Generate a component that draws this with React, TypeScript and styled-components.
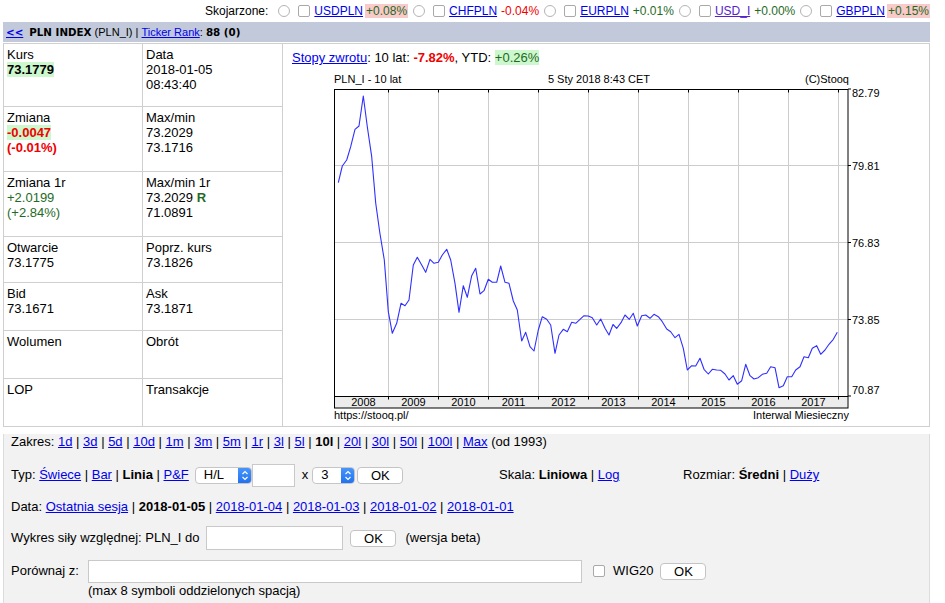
import React from 'react'
import styled, { createGlobalStyle } from 'styled-components'

const GlobalStyle = createGlobalStyle`
  body {
    margin: 0;
    background: #fff;
    color: #000;
    font-family: 'Liberation Sans', Arial, Helvetica, sans-serif;
    font-size: 13px;
  }
`

const UP = '#1f6b1f'
const DOWN = '#f00000'
const LINK = '#0000ee'

const Page = styled.div`
  margin-left: 3px;
  width: 927px;
`

const TopRow = styled.div`
  display: flex;
  justify-content: flex-end;
  align-items: center;
  height: 22px;
  font-size: 12px;
`

const TopLabel = styled.span`
  margin-right: 5px;
`

const Radio = styled.span`
  display: inline-block;
  box-sizing: border-box;
  width: 12px;
  height: 12px;
  margin: 0 8px 0 5px;
  border: 1px solid #b4b4b4;
  border-radius: 50%;
  background: #fff;
`

const Check = styled.span`
  display: inline-block;
  box-sizing: border-box;
  width: 12px;
  height: 12px;
  margin-right: 4px;
  border: 1px solid #a9a9a9;
  border-radius: 2px;
  background: #fff;
`

const Link = styled.a<{ $visited?: boolean }>`
  color: ${(p) => (p.$visited ? '#5522cc' : LINK)};
  text-decoration: underline;
  cursor: pointer;
`

const Change = styled.span<{ $tone: 'up' | 'down'; $pink?: boolean }>`
  margin-left: ${(p) => (p.$pink ? '2px' : '4px')};
  padding: 0 ${(p) => (p.$pink ? '1px' : '0')};
  color: ${(p) => (p.$tone === 'up' ? UP : DOWN)};
  background: ${(p) => (p.$pink ? '#f9caca' : 'transparent')};
`

const HeaderBar = styled.div`
  display: flex;
  align-items: center;
  height: 20px;
  padding-left: 3px;
  background: #c1c9da;
  font-size: 11px;
  white-space: pre;
`

const HeaderBold = styled.b`
  font-family: 'DejaVu Sans', Verdana, sans-serif;
  font-size: 10.3px;
`

const BackLink = styled(Link)`
  font-family: 'DejaVu Sans', Verdana, sans-serif;
  font-size: 10.3px;
  font-weight: bold;
  margin-right: 6px;
`

const MainGrid = styled.div`
  display: grid;
  grid-template-columns: 139px 140px 1fr;
  grid-template-rows: 63px 65px 65px 46px 48px 48px 48px;
  margin-top: 1px;
  border-top: 1px solid #cfcfcf;
  border-left: 1px solid #cfcfcf;
`

const Cell = styled.div`
  box-sizing: border-box;
  padding: 3px 3px;
  line-height: 15px;
  border-right: 1px solid #cfcfcf;
  border-bottom: 1px solid #cfcfcf;
`

const Line = styled.div``

const Val = styled.span<{ $color?: string; $bold?: boolean; $bg?: string }>`
  color: ${(p) => p.$color || '#000'};
  font-weight: ${(p) => (p.$bold ? 'bold' : 'normal')};
  background: ${(p) => p.$bg || 'transparent'};
`

const ChartCell = styled.div`
  grid-column: 3;
  grid-row: 1 / span 7;
  box-sizing: border-box;
  padding: 6px 9px 0;
  line-height: 15px;
  border-right: 1px solid #cfcfcf;
  border-bottom: 1px solid #cfcfcf;
`

const ChartSvg = styled.svg`
  display: block;
  margin: 5px auto 0;
  font-family: 'Liberation Sans', Arial, sans-serif;
  font-size: 11px;
`

const Controls = styled.div`
  box-sizing: border-box;
  min-height: 176px;
  padding: 0 0 10px 7px;
  background: #f2f2f2;
  border-left: 1px solid #dcdcdc;
  border-right: 1px solid #dcdcdc;
`

const Row = styled.div<{ $mt: number; $h?: number }>`
  display: flex;
  align-items: center;
  margin-top: ${(p) => p.$mt}px;
  height: ${(p) => p.$h ?? 16}px;
  line-height: 16px;
  white-space: pre;
`

const Group = styled.div<{ $w?: number }>`
  display: flex;
  align-items: center;
  width: ${(p) => (p.$w ? `${p.$w}px` : 'auto')};
  white-space: pre;
`

const Hint = styled.span`
  margin-left: 9px;
`

const Times = styled.span`
  margin: 0 4px 0 7px;
`

const FakeSelect = styled.div<{ $w: number; $ml?: number }>`
  display: flex;
  align-items: center;
  box-sizing: border-box;
  width: ${(p) => p.$w}px;
  height: 17px;
  margin-left: ${(p) => p.$ml ?? 0}px;
  padding-left: 8px;
  background: #fff;
  border: 1px solid #c6c6c6;
  border-radius: 4px;
  overflow: hidden;
`

const SelectText = styled.span`
  flex: 1;
  font-size: 13px;
`

const Stepper = styled.span`
  display: flex;
  align-items: center;
  justify-content: center;
  width: 14px;
  height: 17px;
  margin-right: -1px;
  background: linear-gradient(#4a98fa, #1f6ff2);
  border-radius: 0 4px 4px 0;
`

const TextInput = styled.div<{ $w: number; $h: number; $ml?: number }>`
  box-sizing: border-box;
  width: ${(p) => p.$w}px;
  height: ${(p) => p.$h}px;
  margin-left: ${(p) => p.$ml ?? 0}px;
  background: #fff;
  border: 1px solid #c9c9c9;
`

const OkButton = styled.button<{ $ml: number }>`
  box-sizing: border-box;
  width: 46px;
  height: 17px;
  margin-left: ${(p) => p.$ml}px;
  padding: 0;
  background: #fff;
  border: 1px solid #c4c4c4;
  border-radius: 4px;
  font-family: inherit;
  font-size: 13px;
  line-height: 15px;
  color: #000;
`

const SmallCheck = styled(Check)`
  margin: 0 8px 0 11px;
`

const CompareGrid = styled.div`
  display: grid;
  grid-template-columns: 77px auto;
  grid-template-rows: 24px 16px;
  align-items: center;
  margin-top: 9px;
  line-height: 16px;
`

const Bold = styled.b``

function Stepbox() {
  return (
    <Stepper>
      <svg width="8" height="11" viewBox="0 0 8 11">
        <path d="M1.5 4 L4 1.5 L6.5 4 M1.5 7 L4 9.5 L6.5 7" fill="none" stroke="#fff" strokeWidth="1.2" />
      </svg>
    </Stepper>
  )
}

const pairs: { sym: string; ch: string; tone: 'up' | 'down'; pink?: boolean; visited?: boolean }[] = [
  { sym: 'USDPLN', ch: '+0.08%', tone: 'up', pink: true },
  { sym: 'CHFPLN', ch: '-0.04%', tone: 'down' },
  { sym: 'EURPLN', ch: '+0.01%', tone: 'up' },
  { sym: 'USD_I', ch: '+0.00%', tone: 'up', visited: true },
  { sym: 'GBPPLN', ch: '+0.15%', tone: 'up', pink: true },
]

const points = `338.3,182.7 342.3,166 346.7,160 350.7,146.7 355,129.3 359,126 363.3,96 367.3,126.7 371.7,156.7
375.7,203 379.7,232 384.3,260 388.3,311.7 392.3,333.3 396.7,323.3 401,303.3 405,305.7 409,300 413.3,265
417.3,257.3 421.7,265 425.7,272.3 430,259.3 434,263.3 438.3,262.3 442.3,255 446.7,249.3 450.7,260 455,283.3
459,312.3 463.3,285.7 467.3,297.3 471.7,275.7 475.7,268.3 480,294 484,290.7 488.3,279.3 492.3,282.3
496.7,282.3 500.7,266 505,282.3 509,283.3 513.3,301 517.3,310 521.7,341 525.7,332.3 530,346.7 534,351
538.3,330 542.3,316.7 546.7,319.3 550.7,325 555,353.3 559,335 563.3,329.3 567.3,331.7 571.7,322.3
575.7,323.3 580,319.3 584,315.7 588.3,316 592.3,317.7 596.7,325 600.7,319 605,328.3 609,335 613,324.5
616.7,328.3 621,322.7 625,315 629.3,319.3 633.3,313.3 637.3,326 641.7,315.7 645.7,315 650,318.3 654,314.3
658.3,316.7 662.3,321.7 666.7,329 670.7,331.7 675,337.7 679,334.3 683.3,348.3 687.3,370 691.7,365.7
695.7,366 700,358.3 704,369.3 708.3,374 712.3,369.3 716.7,370 720.7,370.3 725,374 729,380 733.3,375.7
737.3,384.3 741.7,380.7 745.7,364.3 750,375.7 754,379 758.3,377.7 762.3,374.3 766.7,373.3 770.7,366.7
775,367.7 779,387.7 783.3,385.7 787.3,376.7 791.7,376.7 795.7,370 800,366.7 804,356.7 808.3,357.7
812.3,348.3 816.7,345.7 820.7,354.3 825,350 829,344.3 833.3,339.3 837.3,332.3`

const yLabels = [
  { v: '82.79', y: 89, ty: 97 },
  { v: '79.81', y: 165.5, ty: 170 },
  { v: '76.83', y: 242.5, ty: 246.5 },
  { v: '73.85', y: 319.5, ty: 323.5 },
  { v: '70.87', y: 396, ty: 394 },
]

const years = ['2008', '2009', '2010', '2011', '2012', '2013', '2014', '2015', '2016', '2017']

function Chart() {
  const gridX = Array.from({ length: 10 }, (_, i) => 388.5 + i * 50)
  return (
    <ChartSvg width={547} height={352} viewBox="333 70 547 352">
      <text x={334} y={83}>PLN_I - 10 lat</text>
      <text x={599} y={83} textAnchor="middle">5 Sty 2018 8:43 CET</text>
      <text x={849} y={83} textAnchor="end">(C)Stooq</text>

      <rect x={334.5} y={396.5} width={513} height={11.5} fill="#ececec" />
      {gridX.map((x) => (
        <line key={x} x1={x} y1={89} x2={x} y2={396} stroke="#cdcdcd" />
      ))}
      {yLabels.slice(1, 4).map((l) => (
        <line key={l.v} x1={334} y1={l.y} x2={848} y2={l.y} stroke="#cdcdcd" />
      ))}
      {gridX.map((x) => (
        <g key={`t${x}`}>
          <line x1={x} y1={89} x2={x} y2={92.5} stroke="#000" />
          <line x1={x} y1={396} x2={x} y2={399.5} stroke="#000" />
        </g>
      ))}
      {yLabels.map((l) => (
        <g key={`y${l.v}`}>
          <line x1={848} y1={l.y} x2={851} y2={l.y} stroke="#000" />
          <text x={852} y={l.ty}>{l.v}</text>
        </g>
      ))}
      <rect x={334.5} y={89.5} width={513.5} height={318.5} fill="none" stroke="#000" />
      <line x1={334} y1={396.5} x2={848} y2={396.5} stroke="#000" />
      {years.map((yr, i) => (
        <text key={yr} x={363.5 + i * 50} y={406} textAnchor="middle">
          {yr}
        </text>
      ))}
      <polyline points={points} fill="none" stroke="#2f2fff" strokeWidth={1.1} strokeLinejoin="round" />
      <text x={334} y={419}>https://stooq.pl/</text>
      <text x={849} y={419} textAnchor="end">Interwal Miesieczny</text>
    </ChartSvg>
  )
}

const ranges = ['1d', '3d', '5d', '10d', '1m', '3m', '5m', '1r', '3l', '5l', '10l', '20l', '30l', '50l', '100l', 'Max']
const dates = ['2018-01-04', '2018-01-03', '2018-01-02', '2018-01-01']

export default function App() {
  return (
    <Page>
      <GlobalStyle />
      <TopRow>
        <TopLabel>Skojarzone:</TopLabel>
        {pairs.map((p) => (
          <React.Fragment key={p.sym}>
            <Radio />
            <Check />
            <Link $visited={p.visited}>{p.sym}</Link>
            <Change $tone={p.tone} $pink={p.pink}>
              {p.ch}
            </Change>
          </React.Fragment>
        ))}
      </TopRow>

      <HeaderBar>
        <BackLink>&lt;&lt;</BackLink>
        <HeaderBold>PLN INDEX</HeaderBold>
        {' (PLN_I) | '}
        <Link>Ticker Rank</Link>
        {': '}
        <HeaderBold>88 (0)</HeaderBold>
      </HeaderBar>

      <MainGrid>
        <Cell>
          <Line>Kurs</Line>
          <Line>
            <Val $bold $bg="#cdf7cd">73.1779</Val>
          </Line>
        </Cell>
        <Cell>
          <Line>Data</Line>
          <Line>2018-01-05</Line>
          <Line>08:43:40</Line>
        </Cell>
        <ChartCell>
          <Link>Stopy zwrotu</Link>: 10 lat: <Val $bold $color={DOWN}>-7.82%</Val>, YTD:{' '}
          <Val $color={UP} $bg="#cdf7cd">
            +0.26%
          </Val>
          <Chart />
        </ChartCell>

        <Cell>
          <Line>Zmiana</Line>
          <Line>
            <Val $bold $color={DOWN} $bg="#cdf7cd">
              -0.0047
            </Val>
          </Line>
          <Line>
            <Val $bold $color={DOWN}>
              (-0.01%)
            </Val>
          </Line>
        </Cell>
        <Cell>
          <Line>Max/min</Line>
          <Line>73.2029</Line>
          <Line>73.1716</Line>
        </Cell>

        <Cell>
          <Line>Zmiana 1r</Line>
          <Line>
            <Val $color={UP}>+2.0199</Val>
          </Line>
          <Line>
            <Val $color={UP}>(+2.84%)</Val>
          </Line>
        </Cell>
        <Cell>
          <Line>Max/min 1r</Line>
          <Line>
            73.2029{' '}
            <Val $bold $color={UP}>
              R
            </Val>
          </Line>
          <Line>71.0891</Line>
        </Cell>

        <Cell>
          <Line>Otwarcie</Line>
          <Line>73.1775</Line>
        </Cell>
        <Cell>
          <Line>Poprz. kurs</Line>
          <Line>73.1826</Line>
        </Cell>

        <Cell>
          <Line>Bid</Line>
          <Line>73.1671</Line>
        </Cell>
        <Cell>
          <Line>Ask</Line>
          <Line>73.1871</Line>
        </Cell>

        <Cell>
          <Line>Wolumen</Line>
        </Cell>
        <Cell>
          <Line>Obrót</Line>
        </Cell>

        <Cell>
          <Line>LOP</Line>
        </Cell>
        <Cell>
          <Line>Transakcje</Line>
        </Cell>
      </MainGrid>

      <Controls>
        <Row $mt={7}>
          {'Zakres: '}
          {ranges.map((r, i) => (
            <React.Fragment key={r}>
              {r === '10l' ? <Bold>{r}</Bold> : <Link>{r}</Link>}
              {i < ranges.length - 1 ? ' | ' : ' (od 1993)'}
            </React.Fragment>
          ))}
        </Row>

        <Row $mt={13} $h={24}>
          <Group $w={488}>
            {'Typ: '}
            <Link>Świece</Link>
            {' | '}
            <Link>Bar</Link>
            {' | '}
            <Bold>Linia</Bold>
            {' | '}
            <Link>P&amp;F</Link>
            <FakeSelect $w={57} $ml={6}>
              <SelectText>H/L</SelectText>
              <Stepbox />
            </FakeSelect>
            <TextInput $w={43} $h={23} />
            <Times>x</Times>
            <FakeSelect $w={43}>
              <SelectText>3</SelectText>
              <Stepbox />
            </FakeSelect>
            <OkButton $ml={2}>OK</OkButton>
          </Group>
          <Group $w={184}>
            {'Skala: '}
            <Bold>Liniowa</Bold>
            {' | '}
            <Link>Log</Link>
          </Group>
          <Group>
            {'Rozmiar: '}
            <Bold>Średni</Bold>
            {' | '}
            <Link>Duży</Link>
          </Group>
        </Row>

        <Row $mt={12}>
          {'Data: '}
          <Link>Ostatnia sesja</Link>
          {' | '}
          <Bold>2018-01-05</Bold>
          {dates.map((d) => (
            <React.Fragment key={d}>
              {' | '}
              <Link>{d}</Link>
            </React.Fragment>
          ))}
        </Row>

        <Row $mt={11} $h={24}>
          Wykres siły względnej: PLN_I do
          <TextInput $w={137} $h={24} $ml={7} />
          <OkButton $ml={7}>OK</OkButton>
          <Hint>(wersja beta)</Hint>
        </Row>

        <CompareGrid>
          <span>Porównaj z:</span>
          <Group>
            <TextInput $w={494} $h={23} />
            <SmallCheck />
            WIG20
            <OkButton $ml={7}>OK</OkButton>
          </Group>
          <span />
          <span>(max 8 symboli oddzielonych spacją)</span>
        </CompareGrid>
      </Controls>
    </Page>
  )
}
